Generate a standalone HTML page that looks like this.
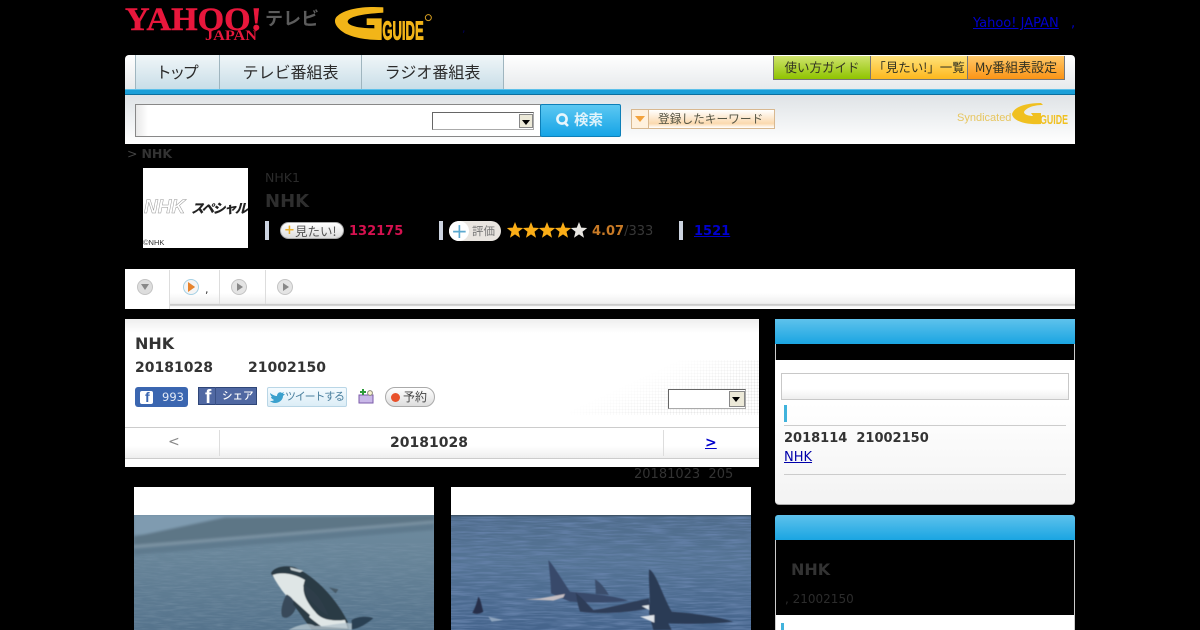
<!DOCTYPE html>
<html lang="ja"><head><meta charset="utf-8"><title>NHK</title>
<style>
html,body{margin:0;padding:0;background:#000;width:1200px;height:630px;overflow:hidden}
body{position:relative;font-family:"DejaVu Sans","Noto Sans CJK JP",sans-serif;font-size:13px;color:#333}
.a{position:absolute;white-space:nowrap}
.box{position:absolute}
.jp{font-family:"Noto Sans CJK JP","DejaVu Sans",sans-serif}
a{color:#00c}
.tab{position:absolute;top:55px;height:34px;background:linear-gradient(#f0f6f8,#c9dee8);border-left:1px solid #9fb5bf;border-right:1px solid #9fb5bf;text-align:center;line-height:33px;font-size:16px;color:#2b2b2b;font-family:"Noto Sans CJK JP",sans-serif;box-sizing:border-box}
.gb{position:absolute;top:56px;height:24px;box-sizing:border-box;border:1px solid #777;border-top:0;text-align:center;line-height:22px;font-size:12.5px;color:#332;font-family:"Noto Sans CJK JP",sans-serif;white-space:nowrap;overflow:hidden}
.sel{position:absolute;box-sizing:border-box;background:#fff;border:1px solid #aaa;border-top-color:#666;border-left-color:#666}
.sel i{position:absolute;right:0;top:1px;bottom:1px;width:14px;background:#ece9d8;border:1px solid #888;box-sizing:border-box}
.sel i:after{content:"";position:absolute;left:2px;top:5px;border:4px solid transparent;border-top:5px solid #000;border-bottom:0}
.ci{position:absolute;width:16px;height:16px;border-radius:50%;background:#e4e4e4;border:1px solid #c4c4c4;box-sizing:border-box}
.ci:after{content:"";position:absolute;left:5px;top:3px;border:4px solid transparent;border-left:6px solid #888;border-right:0}
.vb{position:absolute;top:221px;width:4px;height:19px;background:#ccd3e0}
</style></head><body>

<!-- logos -->
<svg class="box" style="left:120px;top:0" width="150" height="46" viewBox="0 0 150 46">
<text x="5" y="30" font-family="Liberation Serif,serif" font-weight="bold" font-size="33" fill="#e8173c" stroke="#e8173c" stroke-width=".5" textLength="137" lengthAdjust="spacingAndGlyphs">YAHOO!</text>
<text x="85" y="40" font-family="Liberation Serif,serif" font-weight="bold" font-size="15" fill="#e8173c" textLength="52" lengthAdjust="spacingAndGlyphs">JAPAN</text>
</svg>
<div class="a jp" style="left:265px;top:5px;font-size:18px;line-height:26px;color:#5c5c5c;font-weight:700">テレビ</div>
<svg class="box" style="left:325px;top:0" width="120" height="50" viewBox="0 0 360 150">
<path d="M175 22C120 18 60 25 35 50C22 65 35 85 60 100C85 112 120 120 170 120L170 55L125 55L125 75L148 75L148 85C110 85 70 80 68 65C70 50 110 42 175 38Z" fill="#f2b518"/>
<text x="172" y="118" font-family="Liberation Sans,sans-serif" font-weight="bold" font-size="78" fill="#f2b518" stroke="#f2b518" stroke-width="3" textLength="124" lengthAdjust="spacingAndGlyphs">GUIDE</text>
<circle cx="310" cy="53" r="9" fill="none" stroke="#d8a020" stroke-width="3"/></svg>
<a class="a" href="#" style="left:973px;top:16px;color:#00c;font-size:13px;line-height:16px">Yahoo! JAPAN</a>
<div class="a" style="left:1071px;top:16px;color:#00c;font-size:13px;line-height:16px">,</div>
<div class="a" style="left:462px;top:22px;color:#005;font-size:11px;line-height:14px">,</div>

<!-- nav -->
<div class="box" style="left:125px;top:55px;width:950px;height:34px;background:linear-gradient(#fff,#e7eaec);border-radius:4px 4px 0 0"></div>
<div class="tab" style="left:135px;width:85px;letter-spacing:-2.5px;padding-right:3px">トップ</div>
<div class="tab" style="left:219px;width:143px">テレビ番組表</div>
<div class="tab" style="left:361px;width:143px">ラジオ番組表</div>
<div class="box" style="left:125px;top:89px;width:950px;height:6px;background:#1b9fd8;border-top:1px solid #5cc0ea;border-bottom:1px solid #0b6f9e;box-sizing:border-box"></div>
<div class="gb" style="left:773px;width:98px;background:linear-gradient(#cfe36d,#8fc400)">使い方ガイド</div>
<div class="gb" style="left:870px;width:98px;background:linear-gradient(#ffe27a,#fdb81e)">「見たい!」一覧</div>
<div class="gb" style="left:967px;width:98px;background:linear-gradient(#ffc868,#fb9416);font-size:13px">My番組表設定</div>

<!-- search -->
<div class="box" style="left:125px;top:95px;width:950px;height:49px;background:linear-gradient(#dfe3e6,#fff)"></div>
<div class="box" style="left:135px;top:104px;width:406px;height:33px;box-sizing:border-box;border:1px solid #888;background:linear-gradient(90deg,#e8e8e8,#fff 12px)"></div>
<div class="sel" style="left:432px;top:112px;width:102px;height:18px"><i></i></div>
<div class="box" style="left:540px;top:104px;width:81px;height:33px;box-sizing:border-box;border:1px solid #0d7fb8;border-radius:2px;background:linear-gradient(#5cc8f2,#16a4e6)"></div>
<svg class="box" style="left:555px;top:112px" width="16" height="16" viewBox="0 0 16 16"><circle cx="7" cy="7" r="4.6" fill="none" stroke="#e8f6fc" stroke-width="2.6"/><path d="M9 10l4 4" stroke="#e8f6fc" stroke-width="2.6"/></svg>
<div class="a jp" style="left:574px;top:109px;font-size:14.5px;line-height:22px;font-weight:700;color:#dff3fb">検索</div>
<div class="box" style="left:631px;top:109px;width:144px;height:20px;box-sizing:border-box;border:1px solid #d8b890;background:linear-gradient(#fff,#fbd9ae 75%,#fff)"></div>
<div class="box" style="left:632px;top:110px;width:16px;height:18px;background:#fff1de;border-right:1px solid #d8b890"></div>
<div class="box" style="left:635px;top:116px;border:5px solid transparent;border-top:6px solid #f3a23c;border-bottom:0"></div>
<div class="a jp" style="left:658px;top:109px;font-size:11.7px;line-height:20px;color:#554">登録したキーワード</div>
<div class="a" style="left:957px;top:111px;font:11px/14px 'Liberation Sans',sans-serif;color:#e7c660">Syndicated</div>
<svg class="box" style="left:1011px;top:102px" width="58" height="24" viewBox="0 0 58 24"><path d="M1 12C3 5 14 1 30 1L32 3C22 3 15 6 13 10C13 13 19 14 22 14L20 11L30 11L30 22C18 23 2 20 1 12Z" fill="#f0c020"/><text x="29" y="22" font-family="Liberation Sans,sans-serif" font-weight="bold" font-size="13" fill="#f0c020" textLength="28" lengthAdjust="spacingAndGlyphs">GUIDE</text></svg>

<!-- program head -->
<div class="a" style="left:127px;top:146px;font-size:12.5px;line-height:16px;color:#333"><span style="color:#444">&gt;</span> <b>NHK</b></div>
<div class="box" style="left:143px;top:168px;width:105px;height:80px;background:#fff"></div>
<div class="a" style="left:144px;top:198px;font:italic bold 19px/20px 'Liberation Sans',sans-serif;color:#fff;-webkit-text-stroke:.5px #999">NHK</div>
<div class="a jp" style="left:191px;top:198px;font-size:13px;line-height:20px;font-weight:900;font-style:italic;color:#222;letter-spacing:-1.8px">スペシャル</div>
<div class="a" style="left:143px;top:238px;font:7.5px/10px 'Liberation Sans',sans-serif;color:#333">©NHK</div>
<div class="a" style="left:265px;top:170px;font-size:12.5px;line-height:16px;color:#2b2b2b">NHK1</div>
<div class="a" style="left:265px;top:190px;font-size:18px;line-height:23px;font-weight:bold;color:#2e2e2e">NHK</div>
<div class="vb" style="left:265px"></div>
<div class="box" style="left:280px;top:222px;width:64px;height:17px;box-sizing:border-box;border-radius:9px;border:1px solid #aaa;background:linear-gradient(#fff,#ddd)"></div>
<div class="a" style="left:284px;top:223px;font-size:13px;line-height:15px;font-weight:bold;color:#eab02c">+</div>
<div class="a jp" style="left:295px;top:222px;font-size:12.5px;line-height:17px;color:#555">見たい!</div>
<div class="a" style="left:349px;top:223px;font-size:13px;line-height:17px;font-weight:bold;color:#d5114f">132175</div>
<div class="vb" style="left:439px"></div>
<div class="box" style="left:449px;top:221px;width:52px;height:20px;box-sizing:border-box;border-radius:10px;background:#e9e5e0"></div>
<div class="box" style="left:449px;top:221px;width:20px;height:20px;border-radius:50%;background:#fff"></div>
<div class="a" style="left:451px;top:219px;font-size:20px;line-height:24px;color:#5ca9cf">+</div>
<div class="a jp" style="left:472px;top:222px;font-size:11.5px;line-height:18px;color:#777">評価</div>
<svg class="box" style="left:507px;top:222px" width="81" height="17" viewBox="0 0 81 17">
<g fill="#fbae17"><polygon points="8,0 10.2,5.6 16.2,6 11.5,9.8 13,15.7 8,12.4 3,15.7 4.5,9.8 -0.2,6 5.8,5.6"/>
<polygon transform="translate(16 0)" points="8,0 10.2,5.6 16.2,6 11.5,9.8 13,15.7 8,12.4 3,15.7 4.5,9.8 -0.2,6 5.8,5.6"/>
<polygon transform="translate(32 0)" points="8,0 10.2,5.6 16.2,6 11.5,9.8 13,15.7 8,12.4 3,15.7 4.5,9.8 -0.2,6 5.8,5.6"/>
<polygon transform="translate(48 0)" points="8,0 10.2,5.6 16.2,6 11.5,9.8 13,15.7 8,12.4 3,15.7 4.5,9.8 -0.2,6 5.8,5.6"/></g>
<polygon transform="translate(64 0)" fill="#e8e6e2" points="8,0 10.2,5.6 16.2,6 11.5,9.8 13,15.7 8,12.4 3,15.7 4.5,9.8 -0.2,6 5.8,5.6"/>
</svg>
<div class="a" style="left:592px;top:223px;font-size:13px;line-height:17px;color:#c87a26"><b>4.07</b><span style="color:#383838">/333</span></div>
<div class="vb" style="left:679px"></div>
<a class="a" href="#" style="left:694px;top:223px;font-size:13px;line-height:17px;font-weight:bold;color:#00c">1521</a>

<!-- sub tabs -->
<div class="box" style="left:125px;top:269px;width:950px;height:40px;background:linear-gradient(#fff,#fff 60%,#efefef 86%,#bbb 90%,#f5f5f5 93%,#fff)"></div>
<div class="box" style="left:125px;top:270px;width:45px;height:39px;background:#fff;border-right:1px solid #ddd;box-sizing:border-box"></div>
<div class="box" style="left:219px;top:270px;width:1px;height:34px;background:#ddd"></div>
<div class="box" style="left:265px;top:270px;width:1px;height:34px;background:#ddd"></div>
<div class="box" style="left:137px;top:279px;width:16px;height:16px;border-radius:50%;background:#ddd;border:1px solid #c4c4c4;box-sizing:border-box"></div>
<div class="box" style="left:141px;top:284px;border:4px solid transparent;border-top:6px solid #888;border-bottom:0"></div>
<div class="ci" style="left:183px;top:279px;border-color:#a5d0e4;background:#f4f4f4"></div>
<div class="box" style="left:188px;top:282px;border:5px solid transparent;border-left:7px solid #e8842c;border-right:0"></div>
<div class="a" style="left:205px;top:283px;font-size:11px;line-height:13px;color:#333">,</div>
<div class="ci" style="left:231px;top:279px"></div>
<div class="ci" style="left:277px;top:279px"></div>

<!-- main card -->
<div class="box" style="left:125px;top:319px;width:634px;height:148px;background:linear-gradient(#eee,#fff 14px)"></div>
<div class="box" style="left:570px;top:360px;width:189px;height:55px;background-image:radial-gradient(#e8e8e8 .8px,transparent 1px);background-size:3px 3px;-webkit-mask-image:linear-gradient(155deg,transparent 35%,#000 75%)"></div>
<div class="a" style="left:135px;top:333px;font-size:16px;line-height:22px;font-weight:bold;color:#333">NHK</div>
<div class="a" style="left:135px;top:359px;font-size:14px;line-height:18px;font-weight:bold;color:#333">20181028</div>
<div class="a" style="left:248px;top:359px;font-size:14px;line-height:18px;font-weight:bold;color:#333">21002150</div>

<div class="box" style="left:135px;top:387px;width:53px;height:20px;background:#3b66b0;border-radius:3px"></div>
<div class="box" style="left:140px;top:391px;width:13px;height:13px;background:#fff;border-radius:2px"></div>
<div class="a" style="left:145px;top:389px;font:bold 14px/16px 'Liberation Sans',sans-serif;color:#3b66b0">f</div>
<div class="a" style="left:162px;top:389px;font-size:11.5px;line-height:16px;color:#e3eaf6">993</div>
<div class="box" style="left:198px;top:387px;width:59px;height:18px;background:#5068a2;border:1px solid #2f4678;box-sizing:border-box"></div>
<div class="a" style="left:205px;top:387px;font:bold 19px/21px 'Liberation Sans',sans-serif;color:#fff">f</div>
<div class="box" style="left:215px;top:387px;width:1px;height:18px;background:#3a5186"></div>
<div class="a jp" style="left:222px;top:388px;font-size:10.5px;line-height:16px;color:#fff;font-weight:500">シェア</div>
<div class="box" style="left:267px;top:387px;width:80px;height:20px;box-sizing:border-box;border:1px solid #b9d6e6;border-radius:2px;background:linear-gradient(#f4fbff,#dcedf6)"></div>
<svg class="box" style="left:269px;top:390px" width="16" height="14" viewBox="0 0 16 14"><path d="M1 3c3 2 5 3 7 3 0-3 3-5 5-3l2-1-1 2 2 0-2 2c0 4-4 7-8 7-2 0-4-1-5-2 2 0 3 0 4-1C3 9 2 8 2 7l1 0C2 6 1 4 1 3Z" fill="#3aa0cd"/></svg>
<div class="a jp" style="left:285px;top:388px;font-size:11px;line-height:17px;color:#4a7f9e;letter-spacing:-1.2px">ツイートする</div>
<svg class="box" style="left:358px;top:388px" width="16" height="16" viewBox="0 0 16 16"><rect x="1" y="7" width="14" height="8" fill="#c9b8e8" stroke="#7a5aa8"/><path d="M4 1h2v2h2v2H6v2H4V5H2V3h2z" fill="#2e9b3a"/><circle cx="12" cy="5" r="2.4" fill="#f8f2d0" stroke="#887"/></svg>
<div class="box" style="left:385px;top:387px;width:50px;height:20px;box-sizing:border-box;border:1px solid #aaa;border-radius:10px;background:linear-gradient(#fff,#ddd)"></div>
<div class="box" style="left:391px;top:393px;width:9px;height:9px;border-radius:50%;background:#e8502a"></div>
<div class="a jp" style="left:403px;top:388px;font-size:12px;line-height:17px;color:#444">予約</div>

<div class="sel" style="left:668px;top:389px;width:78px;height:20px"><i style="width:16px"></i></div>

<div class="box" style="left:125px;top:427px;width:634px;height:32px;box-sizing:border-box;border-top:1px solid #ccc;border-bottom:1px solid #ccc;background:linear-gradient(#fff 60%,#eee)"></div>
<div class="box" style="left:219px;top:430px;width:1px;height:26px;background:#ddd"></div>
<div class="box" style="left:663px;top:430px;width:1px;height:26px;background:#ddd"></div>
<div class="a" style="left:168px;top:434px;font-size:14px;line-height:17px;color:#888">&lt;</div>
<div class="a" style="left:390px;top:434px;font-size:14px;line-height:18px;font-weight:bold;color:#333">20181028</div>
<a class="a" href="#" style="left:705px;top:434px;font-size:14px;line-height:18px;font-weight:bold;color:#00c">&gt;</a>
<div class="a" style="left:634px;top:467px;font-size:13px;line-height:16px;color:#333">20181023&nbsp; 205</div>

<!-- photo 1 -->
<div class="box" style="left:134px;top:487px;width:300px;height:143px;background:#fff"></div>
<svg class="box" style="left:134px;top:515px" width="300" height="115" viewBox="27 105 900 345">
<defs>
<linearGradient id="s1" x1="0" y1="0" x2="0" y2="1"><stop offset="0" stop-color="#6f8b9f"/><stop offset=".35" stop-color="#688599"/><stop offset="1" stop-color="#55738c"/></linearGradient>
<filter id="b1"><feGaussianBlur stdDeviation="1.5"/></filter>
<filter id="b2"><feGaussianBlur stdDeviation="4"/></filter>
<filter id="n1" x="0" y="0" width="100%" height="100%"><feTurbulence type="fractalNoise" baseFrequency="0.02 0.2" numOctaves="3" seed="3"/><feColorMatrix values="0 0 0 0 0.2  0 0 0 0 0.3  0 0 0 0 0.4  1.6 0 0 0 -0.6"/></filter>
</defs>
<rect x="27" y="105" width="900" height="345" fill="url(#s1)"/>
<rect x="27" y="190" width="900" height="260" filter="url(#n1)" opacity=".55"/>
<g filter="url(#b2)">
<path d="M27 105H927V112L27 165Z" fill="#7f9bb0"/>
<path d="M300 112L927 105V122L27 195V170Z" fill="#5d7686"/>
<path d="M27 195L927 122V130L27 210Z" fill="#7b93a3"/>
<path d="M27 205L927 130V150L27 225Z" fill="#5f7a8e"/>
</g>
<g filter="url(#b1)">
<path d="M438 280C445 262 480 254 510 262C560 285 625 340 668 425L672 450H560C520 390 470 330 438 280Z" fill="#2a3a45"/>
<path d="M443 285C465 276 505 278 540 300C530 325 535 355 570 395C585 415 610 425 660 420L668 445L590 440C550 410 500 370 470 330C458 312 448 298 443 285Z" fill="#dfe6e6"/>
<path d="M535 315C555 320 590 350 612 410L590 395C565 370 535 345 535 315Z" fill="#2d3d48"/>
<path d="M485 343C472 365 465 395 472 410C485 420 505 405 512 385C512 365 500 350 485 343Z" fill="#37495a"/>
<path d="M495 262L535 272L525 277L498 270Z" fill="#c3ced2"/>
<path d="M612 322L640 328L632 340Z" fill="#465a68"/>
<path d="M505 360L555 405L552 412L505 375Z" fill="#2a3a45"/>
<path d="M680 420C700 408 730 408 745 415C725 430 705 445 680 448Z" fill="#2c4152"/>
<path d="M490 450C520 435 550 425 570 438C610 440 650 425 680 430L680 450Z" fill="#b4c4cd" opacity=".8"/>
</g>
</svg>

<!-- photo 2 -->
<div class="box" style="left:451px;top:487px;width:300px;height:143px;background:#fff"></div>
<svg class="box" style="left:451px;top:515px" width="300" height="115" viewBox="18 105 900 345">
<defs><linearGradient id="s2" x1="0" y1="0" x2="0" y2="1"><stop offset="0" stop-color="#4f6c8c"/><stop offset=".4" stop-color="#557495"/><stop offset="1" stop-color="#45648c"/></linearGradient>
<filter id="n2" x="0" y="0" width="100%" height="100%"><feTurbulence type="fractalNoise" baseFrequency="0.012 0.18" numOctaves="3" seed="8"/><feColorMatrix values="0 0 0 0 0.13  0 0 0 0 0.22  0 0 0 0 0.4  2.2 0 0 0 -0.85"/></filter>
<filter id="b3"><feGaussianBlur stdDeviation="1.5"/></filter></defs>
<rect x="18" y="105" width="900" height="345" fill="url(#s2)"/>
<rect x="18" y="105" width="900" height="345" filter="url(#n2)"/>
<rect x="18" y="105" width="900" height="4" fill="#3f5468"/>
<g filter="url(#b3)">
<path d="M310 240C325 255 355 305 375 335C420 340 500 345 550 362C500 370 420 368 375 365L318 340C318 310 313 270 310 240Z" fill="#39496a"/>
<path d="M450 298C465 305 480 325 492 345L452 342C453 328 450 312 450 298Z" fill="#3b4d6c"/>
<path d="M392 338C408 350 430 375 445 390C490 385 560 365 612 355L615 385C560 395 470 405 405 395C398 375 395 355 392 338Z" fill="#2f3c58"/>
<path d="M612 268C632 275 650 340 680 395C740 400 820 410 865 425C810 432 730 432 670 430L680 450H625L612 400C618 355 610 310 612 268Z" fill="#2c3a54"/>
<path d="M100 350C108 358 110 380 115 395C105 403 90 403 82 398C92 382 96 365 100 350Z" fill="#262f48"/>
<path d="M285 355L360 342L355 352L325 362L240 358Z" fill="#c5bec2"/>
<path d="M590 378L612 375L612 390ZM585 410L628 405L628 428Z" fill="#dfe4ea"/>
<path d="M130 410L175 420L140 425Z" fill="#8ea4bd"/>
</g>
</svg>

<!-- side 1 -->
<div class="box" style="left:775px;top:319px;width:300px;height:25px;background:linear-gradient(#5ec2ec,#1aa5e2)"></div>
<div class="box" style="left:775px;top:344px;width:1px;height:17px;background:#ccc"></div>
<div class="box" style="left:1074px;top:344px;width:1px;height:17px;background:#ccc"></div>
<div class="box" style="left:775px;top:360px;width:300px;height:145px;background:linear-gradient(#fff 30%,#f3f3f3);border-radius:0 0 4px 4px;border-bottom:1px solid #aaa;box-sizing:border-box"></div>
<div class="box" style="left:781px;top:373px;width:288px;height:27px;box-sizing:border-box;border:1px solid #c8c8c8;background:linear-gradient(#fff 60%,#eee)"></div>
<div class="box" style="left:784px;top:405px;width:3px;height:17px;background:#41b3dc"></div>
<div class="box" style="left:784px;top:425px;width:282px;height:1px;background:#ccc"></div>
<div class="a" style="left:784px;top:430px;font-size:13px;line-height:17px;font-weight:bold;color:#333">2018114&nbsp; 21002150</div>
<a class="a" href="#" style="left:784px;top:449px;font-size:13px;line-height:17px;color:#00a">NHK</a>
<div class="box" style="left:784px;top:474px;width:282px;height:1px;background:#ccc"></div>

<!-- side 2 -->
<div class="box" style="left:775px;top:515px;width:300px;height:25px;background:linear-gradient(#5ec2ec,#1aa5e2);border-radius:3px 3px 0 0"></div>
<div class="box" style="left:775px;top:540px;width:1px;height:90px;background:#ccc"></div>
<div class="box" style="left:1074px;top:540px;width:1px;height:90px;background:#ccc"></div>
<div class="a" style="left:791px;top:559px;font-size:16px;line-height:21px;font-weight:bold;color:#333">NHK</div>
<div class="a" style="left:785px;top:591px;font-size:12px;line-height:16px;color:#2c2c2c">, 21002150</div>
<div class="box" style="left:776px;top:615px;width:298px;height:15px;background:#fff"></div>
<div class="box" style="left:781px;top:623px;width:3px;height:7px;background:#41b3dc"></div>
</body></html>
